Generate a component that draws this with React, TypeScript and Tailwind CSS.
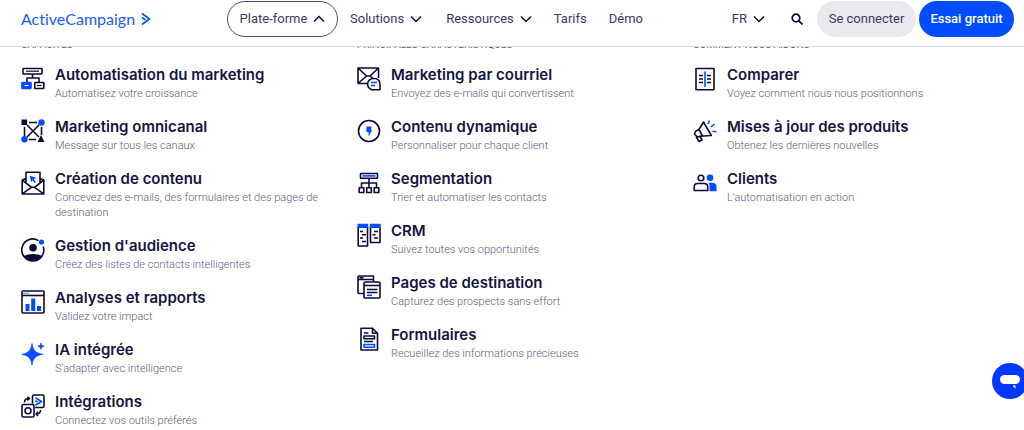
import type { ReactNode } from "react";

type Item = {
  title: string;
  text: string;
  icon: ReactNode;
};

type Column = {
  heading: string;
  items: Item[];
};

const INK = "#0b0b3b";
const BLUE = "#004cff";

function Icon({ children }: { children: ReactNode }) {
  return (
    <svg
      viewBox="0 0 24 24"
      className="mt-[3px] size-6 shrink-0"
      fill="none"
      stroke={INK}
      strokeWidth="1.6"
      strokeLinejoin="round"
      aria-hidden="true"
    >
      {children}
    </svg>
  );
}

const columns: Column[] = [
  {
    heading: "Capacités",
    items: [
      {
        title: "Automatisation du marketing",
        text: "Automatisez votre croissance",
        icon: (
          <Icon>
            <rect x="2" y="1.5" width="19" height="5.5" rx="0.5" />
            <path d="M5 4.2h13" strokeWidth="1.2" />
            <path d="M11.5 7v4M6 15v-4h12v4" />
            <rect x="1" y="15.5" width="9" height="6" rx="0.5" fill={BLUE} stroke={BLUE} />
            <path d="M3.500 18.500h4" stroke="#fff" strokeWidth="1" />
            <rect x="13.800" y="15.500" width="9" height="6" rx="0.500" />
            <path d="M16 18.500h4.600" strokeWidth="1.200" />
          </Icon>
        ),
      },
      {
        title: "Marketing omnicanal",
        text: "Message sur tous les canaux",
        icon: (
          <Icon>
            <path d="M8 3.500h8M3.500 8v9M20.500 8v8M8 20.500h7M6 6l12 12M18 6L6 18" />
            <path d="M.5.5h5.600v5.600H.5zM20 16l3.500 7h-7z" fill={INK} stroke="none" />
            <circle cx="20.500" cy="3.500" r="3.200" fill={BLUE} stroke="none" />
            <circle cx="3.500" cy="20.300" r="3.200" fill={BLUE} stroke="none" />
          </Icon>
        ),
      },
      {
        title: "Création de contenu",
        text: "Concevez des e-mails, des formulaires et des pages de destination",
        icon: (
          <Icon>
            <path d="M5 11V1.200h14V11M5 7.500L1.200 9v14h21.600V9L19 7.500M1.200 9l9.300 7.300h3L22.800 9M1.200 22.800l9.300-6.500M22.800 22.800l-9.300-6.500" />
            <path d="M8.800 4.500l6.500 2.600-2.600 1.200 2.300 2.800-1.200 1-2.300-2.800-1.500 2z" fill={BLUE} stroke="none" />
          </Icon>
        ),
      },
      {
        title: "Gestion d'audience",
        text: "Créez des listes de contacts intelligentes",
        icon: (
          <Icon>
            <path d="M17.500 2.600A11 11 0 1 0 22.200 8.500" />
            <circle cx="12" cy="9.800" r="3.800" fill={INK} stroke="none" />
            <path d="M2.500 18q4-2 9.500-2t9.500 2A11.500 11.500 0 0 1 2.500 18z" fill={INK} stroke="none" />
            <circle cx="20.500" cy="4" r="2.600" fill={BLUE} stroke="none" />
          </Icon>
        ),
      },
      {
        title: "Analyses et rapports",
        text: "Validez votre impact",
        icon: (
          <Icon>
            <rect x="1" y="1" width="22" height="22" rx="1" />
            <path d="M1 5.500h22" />
            <path d="M2.500 3.300h6" strokeDasharray="1 1" strokeWidth="1" />
            <path d="M4.500 14h4v7h-4zM10.200 8.500h4V21h-4zM16 16h4v5h-4z" fill={BLUE} stroke="none" />
          </Icon>
        ),
      },
      {
        title: "IA intégrée",
        text: "S'adapter avec intelligence",
        icon: (
          <Icon>
            <g fill={BLUE} stroke={BLUE} strokeWidth="0.700">
              <path d="M11 1.500c1 7 3.500 9.500 11 10.800-7.500 1.200-10 4-11 10.700C10 16.300 7.500 13.500.8 12.300 7.500 11 10 8.500 11 1.500z" />
              <path d="M20 1c.4 2.200 1 2.800 3.200 3.200-2.200.5-2.800 1.200-3.200 3.200-.4-2-1-2.700-3.200-3.200C19 3.800 19.600 3.200 20 1z" />
            </g>
          </Icon>
        ),
      },
      {
        title: "Intégrations",
        text: "Connectez vos outils préférés",
        icon: (
          <Icon>
            <path d="M11.500 9.800V2.500a1.500 1.500 0 0 1 1.500-1.500h8.500A1.500 1.500 0 0 1 23 2.500v9.500a1.500 1.500 0 0 1-1.500 1.500h-7.300" />
            <rect x="1" y="10.500" width="12" height="12.500" rx="1.500" />
            <circle cx="7" cy="16.800" r="3" />
            <path d="M14.500 3.800l6 3.700-6 3.700M14.500 6.800l2.200 1.200" stroke={BLUE} />
            <path d="M3.500 8.500q0-4 4-4M6.300 2.800l2.200 1.700-2.200 1.800M19.500 16q0 4-4 4M17 17.800l-2 2.200 2 1.800" />
          </Icon>
        ),
      },
    ],
  },
  {
    heading: "Principales caractéristiques",
    items: [
      {
        title: "Marketing par courriel",
        text: "Envoyez des e-mails qui convertissent",
        icon: (
          <Icon>
            <path d="M11 16.500H1V1h20.500v10M1 1l8.500 8h3.500l8.500-8M1 16.500l8.500-7.500M13 9l3 2.500" />
            <path d="M17 11.500a5.700 5.700 0 1 0 0 11.300h6V17a5.600 5.600 0 0 0-6-5.500z" />
            <path d="M14 15.500h6M14 18.500h4" stroke={BLUE} />
          </Icon>
        ),
      },
      {
        title: "Contenu dynamique",
        text: "Personnaliser pour chaque client",
        icon: (
          <Icon>
            <circle cx="12" cy="12" r="10.500" />
            <path d="M9.500 7.500h5l-.5 3.500h1.200L11.500 17.500V13H9.300z" fill={BLUE} stroke="none" />
          </Icon>
        ),
      },
      {
        title: "Segmentation",
        text: "Trier et automatiser les contacts",
        icon: (
          <Icon>
            <rect x="3.500" y="2.500" width="17" height="4.800" rx="0.500" />
            <path d="M5.500 4.900h13" stroke={BLUE} />
            <path d="M12 7.500v9M4.500 16.500v-4.500h15v4.500" />
            <path d="M2.200 16.800h4.600v4.700H2.200zM9.700 16.800h4.600v4.700H9.700zM17.200 16.800h4.600v4.700h-4.600z" />
          </Icon>
        ),
      },
      {
        title: "CRM",
        text: "Suivez toutes vos opportunités",
        icon: (
          <Icon>
            <path d="M1.200 4v19h9.300V4M13.500 4v15.500H23V4" />
            <path d="M.5.800h10.700v4.200H.5zM12.800.800h10.900v4.200H12.800z" fill={BLUE} stroke="none" />
            <path d="M3 8.500h3M5 11.800h4M3 15h3M5 18.500h4M17 8.500h4M15.500 11.800h3M17 15h4" />
          </Icon>
        ),
      },
      {
        title: "Pages de destination",
        text: "Capturez des prospects sans effort",
        icon: (
          <Icon>
            <path d="M7 18.500H2a1 1 0 0 1-1-1V2a1 1 0 0 1 1-1h14.500v5.500M1 4.500h15.500M2.500 2.800h4" />
            <rect x="7" y="7" width="16" height="16" rx="1" />
            <path d="M7 10.500h16M10 14.500h10.500M10 17.500h10.500" />
            <path d="M10 20.300h5" stroke={BLUE} />
          </Icon>
        ),
      },
      {
        title: "Formulaires",
        text: "Recueillez des informations précieuses",
        icon: (
          <Icon>
            <path d="M4 1.200h11.500l5 5V23H4zM15.500 1.200v5h5" />
            <path d="M7 6h4.500M7 14.500h9M7 9h10.500v2.800H7z" />
            <path d="M7 17.500h10.500v2.800H7z" stroke={BLUE} />
          </Icon>
        ),
      },
    ],
  },
  {
    heading: "Comment nous aidons",
    items: [
      {
        title: "Comparer",
        text: "Voyez comment nous nous positionnons",
        icon: (
          <Icon>
            <path d="M3 1.500h18v21.300H3z" />
            <path d="M6 8.500h4M6 12h4M6 15.500h4M14 8.500h4M14 12h4M14 15.500h4" />
            <path d="M12 4.500v15.500" stroke={BLUE} />
          </Icon>
        ),
      },
      {
        title: "Mises à jour des produits",
        text: "Obtenez les dernières nouvelles",
        icon: (
          <Icon>
            <path d="M10.500 3l7.800 13.500-11 .8-2.800.7L1.500 15l1-2.800L6 10.500zM6 10.500l3.500 6.500M3 17.500l3 5 3-1.500-2-3.700" />
            <path d="M15 5l1.500-3.500M18 8l3.500-3M19.500 12.200l4 .5" stroke={BLUE} />
          </Icon>
        ),
      },
      {
        title: "Clients",
        text: "L'automatisation en action",
        icon: (
          <Icon>
            <circle cx="8" cy="7" r="2.800" />
            <path d="M1.200 19.500V16q0-3.500 3.500-3.500h6.500q3.500 0 3.500 3.500v3.500z" />
            <g fill={BLUE} stroke="none">
              <circle cx="17" cy="6.800" r="3.300" />
              <path d="M15.500 11.800h3.500q4.500 0 4.500 4v4.500h-7V15q0-2-1-3.200z" />
            </g>
          </Icon>
        ),
      },
    ],
  },
];

function Chevron({ up }: { up?: boolean }) {
  return (
    <svg viewBox="0 0 12 8" className="h-2 w-3" fill="none" stroke={INK} strokeWidth="1.500" aria-hidden="true">
      <path d={up ? "M1 6.500l5-5 5 5" : "M1 1.500l5 5 5-5"} />
    </svg>
  );
}

function Logo() {
  return (
    <a
      href="#"
      className="flex w-[206px] shrink-0 items-center gap-1.5 font-['Lato',sans-serif] text-base text-[#1a5cff] [font-variant-ligatures:none]"
    >
      ActiveCampaign
      <svg viewBox="0 0 10 14" className="h-3.5 w-2.5" fill="none" stroke={BLUE} strokeWidth="1.600" aria-hidden="true">
        <path d="M1 1.500l7.500 5.500L1 12.500M1 5.500l3.500 2.300" />
      </svg>
    </a>
  );
}

function Header() {
  return (
    <header className="relative z-10 flex items-center border-b border-[#dcdce0] bg-white pt-px pr-2.5 pb-[9px] pl-[21px] text-[13px] text-[#3b3b62]">
      <Logo />
      <nav className="flex items-center">
        <button className="flex h-9 w-[111px] items-center justify-center gap-1.5 rounded-full border border-[#4b4b73]">
          Plate-forme
          <Chevron up />
        </button>
        <button className="ml-3 flex items-center gap-1.5">
          Solutions
          <Chevron />
        </button>
        <button className="ml-6 flex items-center gap-1.5">
          Ressources
          <Chevron />
        </button>
        <a href="#" className="ml-[22px]">Tarifs</a>
        <a href="#" className="ml-[22px]">Démo</a>
      </nav>
      <div className="ml-auto flex items-center">
        <button className="flex items-center gap-1.5">
          FR
          <Chevron />
        </button>
        <button aria-label="Rechercher" className="mr-3.5 ml-[26px]">
          <svg viewBox="0 0 12 12" className="size-3" fill="none" stroke={INK} strokeWidth="1.700" aria-hidden="true">
            <circle cx="5" cy="5" r="3.800" />
            <path d="M7.800 7.800l3.700 3.700" />
          </svg>
        </button>
        <a href="#" className="flex h-9 w-[99px] items-center justify-center rounded-full bg-[#e9e9ee]">
          Se connecter
        </a>
        <a
          href="#"
          className="ml-[3px] flex h-9 w-[95px] items-center justify-center rounded-full bg-[#004cff] font-medium text-white"
        >
          Essai gratuit
        </a>
      </div>
    </header>
  );
}

export default function App() {
  return (
    <div className="bg-white font-['Roboto','Liberation_Sans',sans-serif]">
      <Header />
      {/* the panel is scrolled a little, so its headings tuck under the header */}
      <main className="-mt-2 grid grid-cols-3 gap-[26px] px-[21px]">
        {columns.map((col) => (
          <section key={col.heading}>
            <h2 className="mb-[13px] text-[10px] leading-3 text-[#5b5b7f] uppercase">{col.heading}</h2>
            <ul className="flex flex-col gap-[15px]">
              {col.items.map((item) => (
                <li key={item.title}>
                  <a href="#" className="flex gap-2.5">
                    {item.icon}
                    <span>
                      <span className="block font-['Inter',sans-serif] text-[15px] leading-[22px] font-semibold text-[#15153f]">
                        {item.title}
                      </span>
                      <span className="block text-[11px] leading-[15px] font-light text-[#5c5c7c]">{item.text}</span>
                    </span>
                  </a>
                </li>
              ))}
            </ul>
          </section>
        ))}
      </main>
      <button
        aria-label="Ouvrir le chat"
        className="fixed -right-1 bottom-[31px] flex size-9 items-center justify-center rounded-full bg-[#0037ff]"
      >
        <svg viewBox="0 0 20 16" className="h-4 w-5" fill="#fff" aria-hidden="true">
          <rect x="0" y="2" width="20" height="9" rx="4.500" />
          <path d="M12.500 12.500h3v3.300z" />
        </svg>
      </button>
    </div>
  );
}
